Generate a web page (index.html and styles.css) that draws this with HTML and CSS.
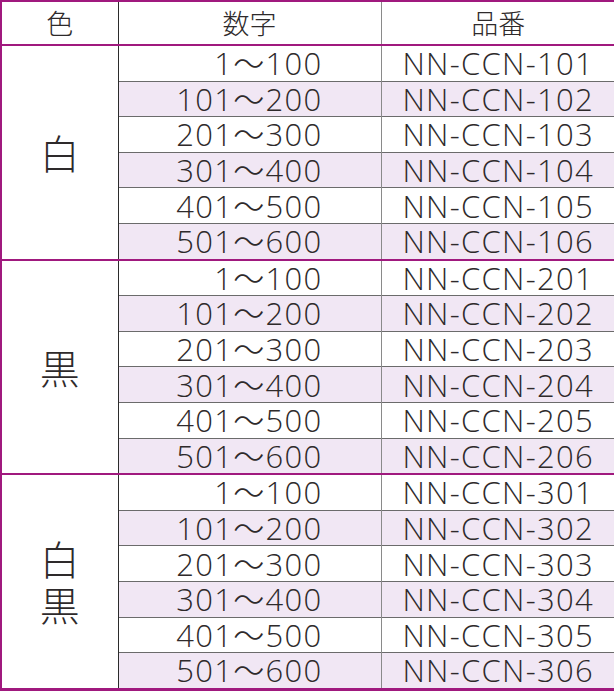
FILE: index.html
```html
<!DOCTYPE html>
<html lang="ja">
<head>
<meta charset="utf-8">
<link rel="stylesheet" href="styles.css">
</head>
<body>
<table class="spec">
  <colgroup><col class="w-color"><col class="w-num"><col class="w-code"></colgroup>
  <thead>
    <tr><th class="c-color">色</th><th class="c-num-h">数字</th><th class="c-code">品番</th></tr>
  </thead>
  <tbody>
    <tr><td class="c-color" rowspan="6">白</td><td class="c-num">1〜100</td><td class="c-code">NN-CCN-101</td></tr>
    <tr class="alt"><td class="c-num">101〜200</td><td class="c-code">NN-CCN-102</td></tr>
    <tr><td class="c-num">201〜300</td><td class="c-code">NN-CCN-103</td></tr>
    <tr class="alt"><td class="c-num">301〜400</td><td class="c-code">NN-CCN-104</td></tr>
    <tr><td class="c-num">401〜500</td><td class="c-code">NN-CCN-105</td></tr>
    <tr class="alt"><td class="c-num">501〜600</td><td class="c-code">NN-CCN-106</td></tr>
  </tbody>
  <tbody>
    <tr><td class="c-color" rowspan="6">黒</td><td class="c-num">1〜100</td><td class="c-code">NN-CCN-201</td></tr>
    <tr class="alt"><td class="c-num">101〜200</td><td class="c-code">NN-CCN-202</td></tr>
    <tr><td class="c-num">201〜300</td><td class="c-code">NN-CCN-203</td></tr>
    <tr class="alt"><td class="c-num">301〜400</td><td class="c-code">NN-CCN-204</td></tr>
    <tr><td class="c-num">401〜500</td><td class="c-code">NN-CCN-205</td></tr>
    <tr class="alt"><td class="c-num">501〜600</td><td class="c-code">NN-CCN-206</td></tr>
  </tbody>
  <tbody>
    <tr><td class="c-color stack" rowspan="6">白<br>黒</td><td class="c-num">1〜100</td><td class="c-code">NN-CCN-301</td></tr>
    <tr class="alt"><td class="c-num">101〜200</td><td class="c-code">NN-CCN-302</td></tr>
    <tr><td class="c-num">201〜300</td><td class="c-code">NN-CCN-303</td></tr>
    <tr class="alt"><td class="c-num">301〜400</td><td class="c-code">NN-CCN-304</td></tr>
    <tr><td class="c-num">401〜500</td><td class="c-code">NN-CCN-305</td></tr>
    <tr class="alt"><td class="c-num">501〜600</td><td class="c-code">NN-CCN-306</td></tr>
  </tbody>
</table>
</body>
</html>
```
FILE: styles.css
```css
html, body {
  margin: 0;
  padding: 0;
  background: #ffffff;
}

.spec {
  width: 614px;
  border-collapse: collapse;
  table-layout: fixed;
  border: 2px solid #a0197e;
  border-bottom-width: 3px;
  font-family: "Open Sans", "Noto Sans CJK JP", sans-serif;
  font-weight: 300;
  color: #2e2a2b;
}

.w-color { width: 117px; }
.w-num { width: 263px; }
.w-code { width: 234px; }

.spec thead th {
  height: 42px;
  padding: 0;
  font-family: "Noto Sans CJK JP", sans-serif;
  font-weight: 300;
  font-size: 27px;
  line-height: 30px;
  text-align: center;
  border-bottom: 2px solid #a0197e;
}

.spec tbody {
  border-top: 2px solid #a0197e;
}

.spec td {
  height: 34.6px;
  padding: 0;
  font-size: 31px;
  line-height: 30px;
  letter-spacing: 1.3px;
  border-top: 1px solid #6b6b6b;
}

.spec tr.alt td {
  background: #f1e7f4;
}

.spec .c-color {
  border-right: 1px solid #2b2b2b;
  text-align: center;
  background: #ffffff;
}

.spec td.c-color {
  font-family: "Noto Sans CJK JP", sans-serif;
  font-size: 40px;
  line-height: 46px;
  letter-spacing: 0;
}

.spec .c-num-h {
  border-right: 1px solid #8a8a8a;
}

.spec td.c-num {
  text-align: right;
  padding-right: 58px;
  border-right: 1px solid #8a8a8a;
}

.spec .c-code {
  text-align: center;
  padding-left: 1px;
}
```
